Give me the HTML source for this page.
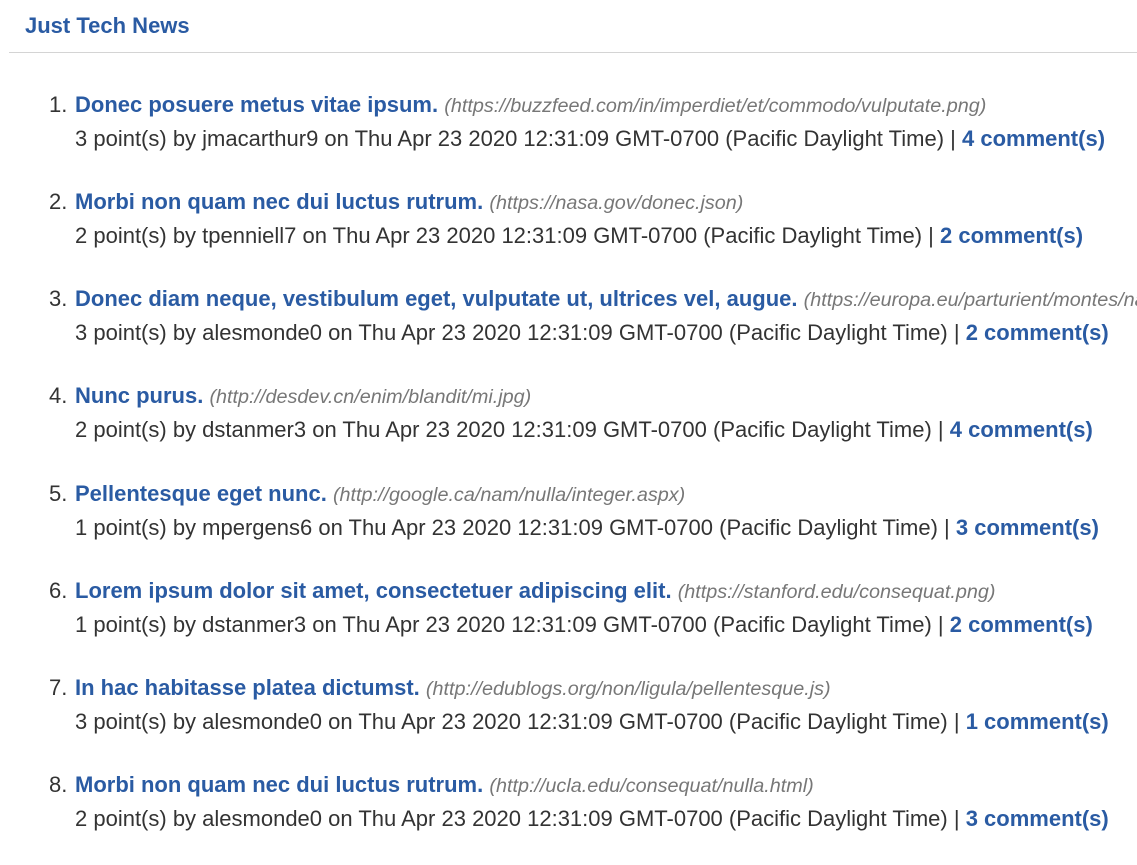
<!DOCTYPE html>
<html><head><meta charset="utf-8"><style>
html,body{margin:0;padding:0;background:#fff;width:1137px;height:854px;overflow:hidden}
body{font-family:"Liberation Sans",Arial,sans-serif;color:#333}
.hdr{height:52px;margin-left:9px;border-bottom:1px solid #d4d4d4;position:relative}
.hdr h1{position:absolute;left:16px;top:13px;margin:0;font-size:22px;font-weight:bold;color:#2a5ba3;line-height:26px}
ol{margin:0;padding:0;position:absolute;top:88px;left:0;width:1137px;overflow:hidden;list-style:none}
li{position:relative;height:97.15px;white-space:nowrap;font-size:22px;overflow:hidden}
.n{position:absolute;left:49px;top:0;line-height:34px}
.t{position:absolute;left:75px;top:0;line-height:34px}
.m{position:absolute;left:75px;top:34px;line-height:34px}
b,a{color:#2a5ba3;font-weight:bold;text-decoration:none}
i{color:#777;font-size:19.8px}
</style></head><body>
<div class="hdr"><h1>Just Tech News</h1></div>
<ol>
<li><span class="n">1.</span><span class="t"><b>Donec posuere metus vitae ipsum.</b> <i>(https://buzzfeed.com/in/imperdiet/et/commodo/vulputate.png)</i></span><span class="m">3 point(s) by jmacarthur9 on Thu Apr 23 2020 12:31:09 GMT-0700 (Pacific Daylight Time) | <a>4 comment(s)</a></span></li>
<li><span class="n">2.</span><span class="t"><b>Morbi non quam nec dui luctus rutrum.</b> <i>(https://nasa.gov/donec.json)</i></span><span class="m">2 point(s) by tpenniell7 on Thu Apr 23 2020 12:31:09 GMT-0700 (Pacific Daylight Time) | <a>2 comment(s)</a></span></li>
<li><span class="n">3.</span><span class="t"><b>Donec diam neque, vestibulum eget, vulputate ut, ultrices vel, augue.</b> <i>(https://europa.eu/parturient/montes/nascetur.json)</i></span><span class="m">3 point(s) by alesmonde0 on Thu Apr 23 2020 12:31:09 GMT-0700 (Pacific Daylight Time) | <a>2 comment(s)</a></span></li>
<li><span class="n">4.</span><span class="t"><b>Nunc purus.</b> <i>(http://desdev.cn/enim/blandit/mi.jpg)</i></span><span class="m">2 point(s) by dstanmer3 on Thu Apr 23 2020 12:31:09 GMT-0700 (Pacific Daylight Time) | <a>4 comment(s)</a></span></li>
<li><span class="n">5.</span><span class="t"><b>Pellentesque eget nunc.</b> <i>(http://google.ca/nam/nulla/integer.aspx)</i></span><span class="m">1 point(s) by mpergens6 on Thu Apr 23 2020 12:31:09 GMT-0700 (Pacific Daylight Time) | <a>3 comment(s)</a></span></li>
<li><span class="n">6.</span><span class="t"><b>Lorem ipsum dolor sit amet, consectetuer adipiscing elit.</b> <i>(https://stanford.edu/consequat.png)</i></span><span class="m">1 point(s) by dstanmer3 on Thu Apr 23 2020 12:31:09 GMT-0700 (Pacific Daylight Time) | <a>2 comment(s)</a></span></li>
<li><span class="n">7.</span><span class="t"><b>In hac habitasse platea dictumst.</b> <i>(http://edublogs.org/non/ligula/pellentesque.js)</i></span><span class="m">3 point(s) by alesmonde0 on Thu Apr 23 2020 12:31:09 GMT-0700 (Pacific Daylight Time) | <a>1 comment(s)</a></span></li>
<li><span class="n">8.</span><span class="t"><b>Morbi non quam nec dui luctus rutrum.</b> <i>(http://ucla.edu/consequat/nulla.html)</i></span><span class="m">2 point(s) by alesmonde0 on Thu Apr 23 2020 12:31:09 GMT-0700 (Pacific Daylight Time) | <a>3 comment(s)</a></span></li>
</ol>
</body></html>
